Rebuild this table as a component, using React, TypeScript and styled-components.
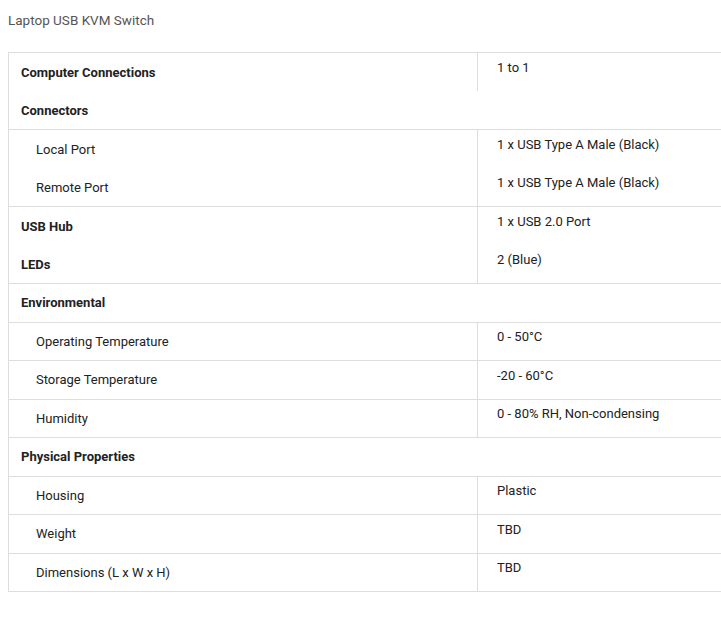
import React from "react";
import styled, { createGlobalStyle } from "styled-components";

const Global = createGlobalStyle`
  html, body { margin: 0; padding: 0; overflow: hidden; background: #fff; }
  body { font-family: Roboto, "Liberation Sans", Arial, sans-serif; }
`;

const Page = styled.div`
  padding: 12px 8px 0 8px;
  width: 740px;
`;

const Title = styled.div`
  font-size: 13.5px;
  line-height: 17px;
  color: #555;
  margin-bottom: 23px;
`;

const Table = styled.table`
  width: 740px;
  border-collapse: collapse;
  border: 1px solid #ddd;
  font-size: 13px;
  color: #222;
`;

const Group = styled.tbody`
  border-top: 1px solid #ddd;
`;

const Label = styled.td<{ $bold?: boolean; $sub?: boolean }>`
  width: 469px;
  height: 38.5px;
  box-sizing: border-box;
  padding: 1px 12px 0 ${(p) => (p.$sub ? 27 : 12)}px;
  vertical-align: middle;
  font-weight: ${(p) => (p.$bold ? 700 : 400)};
  line-height: 18px;
`;

const Value = styled.td`
  border-left: 1px solid #ddd;
  padding: 5.5px 19px 0 19px;
  vertical-align: top;
  line-height: 18px;
`;

type Row = { label: string; value?: string; kind: "bold" | "sub" | "head" };

const groups: Row[][] = [
  [
    { label: "Computer Connections", value: "1 to 1", kind: "bold" },
    { label: "Connectors", kind: "head" },
  ],
  [
    { label: "Local Port", value: "1 x USB Type A Male (Black)", kind: "sub" },
    { label: "Remote Port", value: "1 x USB Type A Male (Black)", kind: "sub" },
  ],
  [
    { label: "USB Hub", value: "1 x USB 2.0 Port", kind: "bold" },
    { label: "LEDs", value: "2 (Blue)", kind: "bold" },
  ],
  [{ label: "Environmental", kind: "head" }],
  [{ label: "Operating Temperature", value: "0 - 50°C", kind: "sub" }],
  [{ label: "Storage Temperature", value: "-20 - 60°C", kind: "sub" }],
  [{ label: "Humidity", value: "0 - 80% RH, Non-condensing", kind: "sub" }],
  [{ label: "Physical Properties", kind: "head" }],
  [{ label: "Housing", value: "Plastic", kind: "sub" }],
  [{ label: "Weight", value: "TBD", kind: "sub" }],
  [{ label: "Dimensions (L x W x H)", value: "TBD", kind: "sub" }],
];

export default function App() {
  return (
    <>
      <Global />
      <Page>
        <Title>Laptop USB KVM Switch</Title>
        <Table>
          {groups.map((g, i) => (
            <Group key={i}>
              {g.map((r) =>
                r.kind === "head" ? (
                  <tr key={r.label}>
                    <Label $bold colSpan={2}>
                      {r.label}
                    </Label>
                  </tr>
                ) : (
                  <tr key={r.label}>
                    <Label $bold={r.kind === "bold"} $sub={r.kind === "sub"}>
                      {r.label}
                    </Label>
                    <Value>{r.value}</Value>
                  </tr>
                )
              )}
            </Group>
          ))}
        </Table>
      </Page>
    </>
  );
}
